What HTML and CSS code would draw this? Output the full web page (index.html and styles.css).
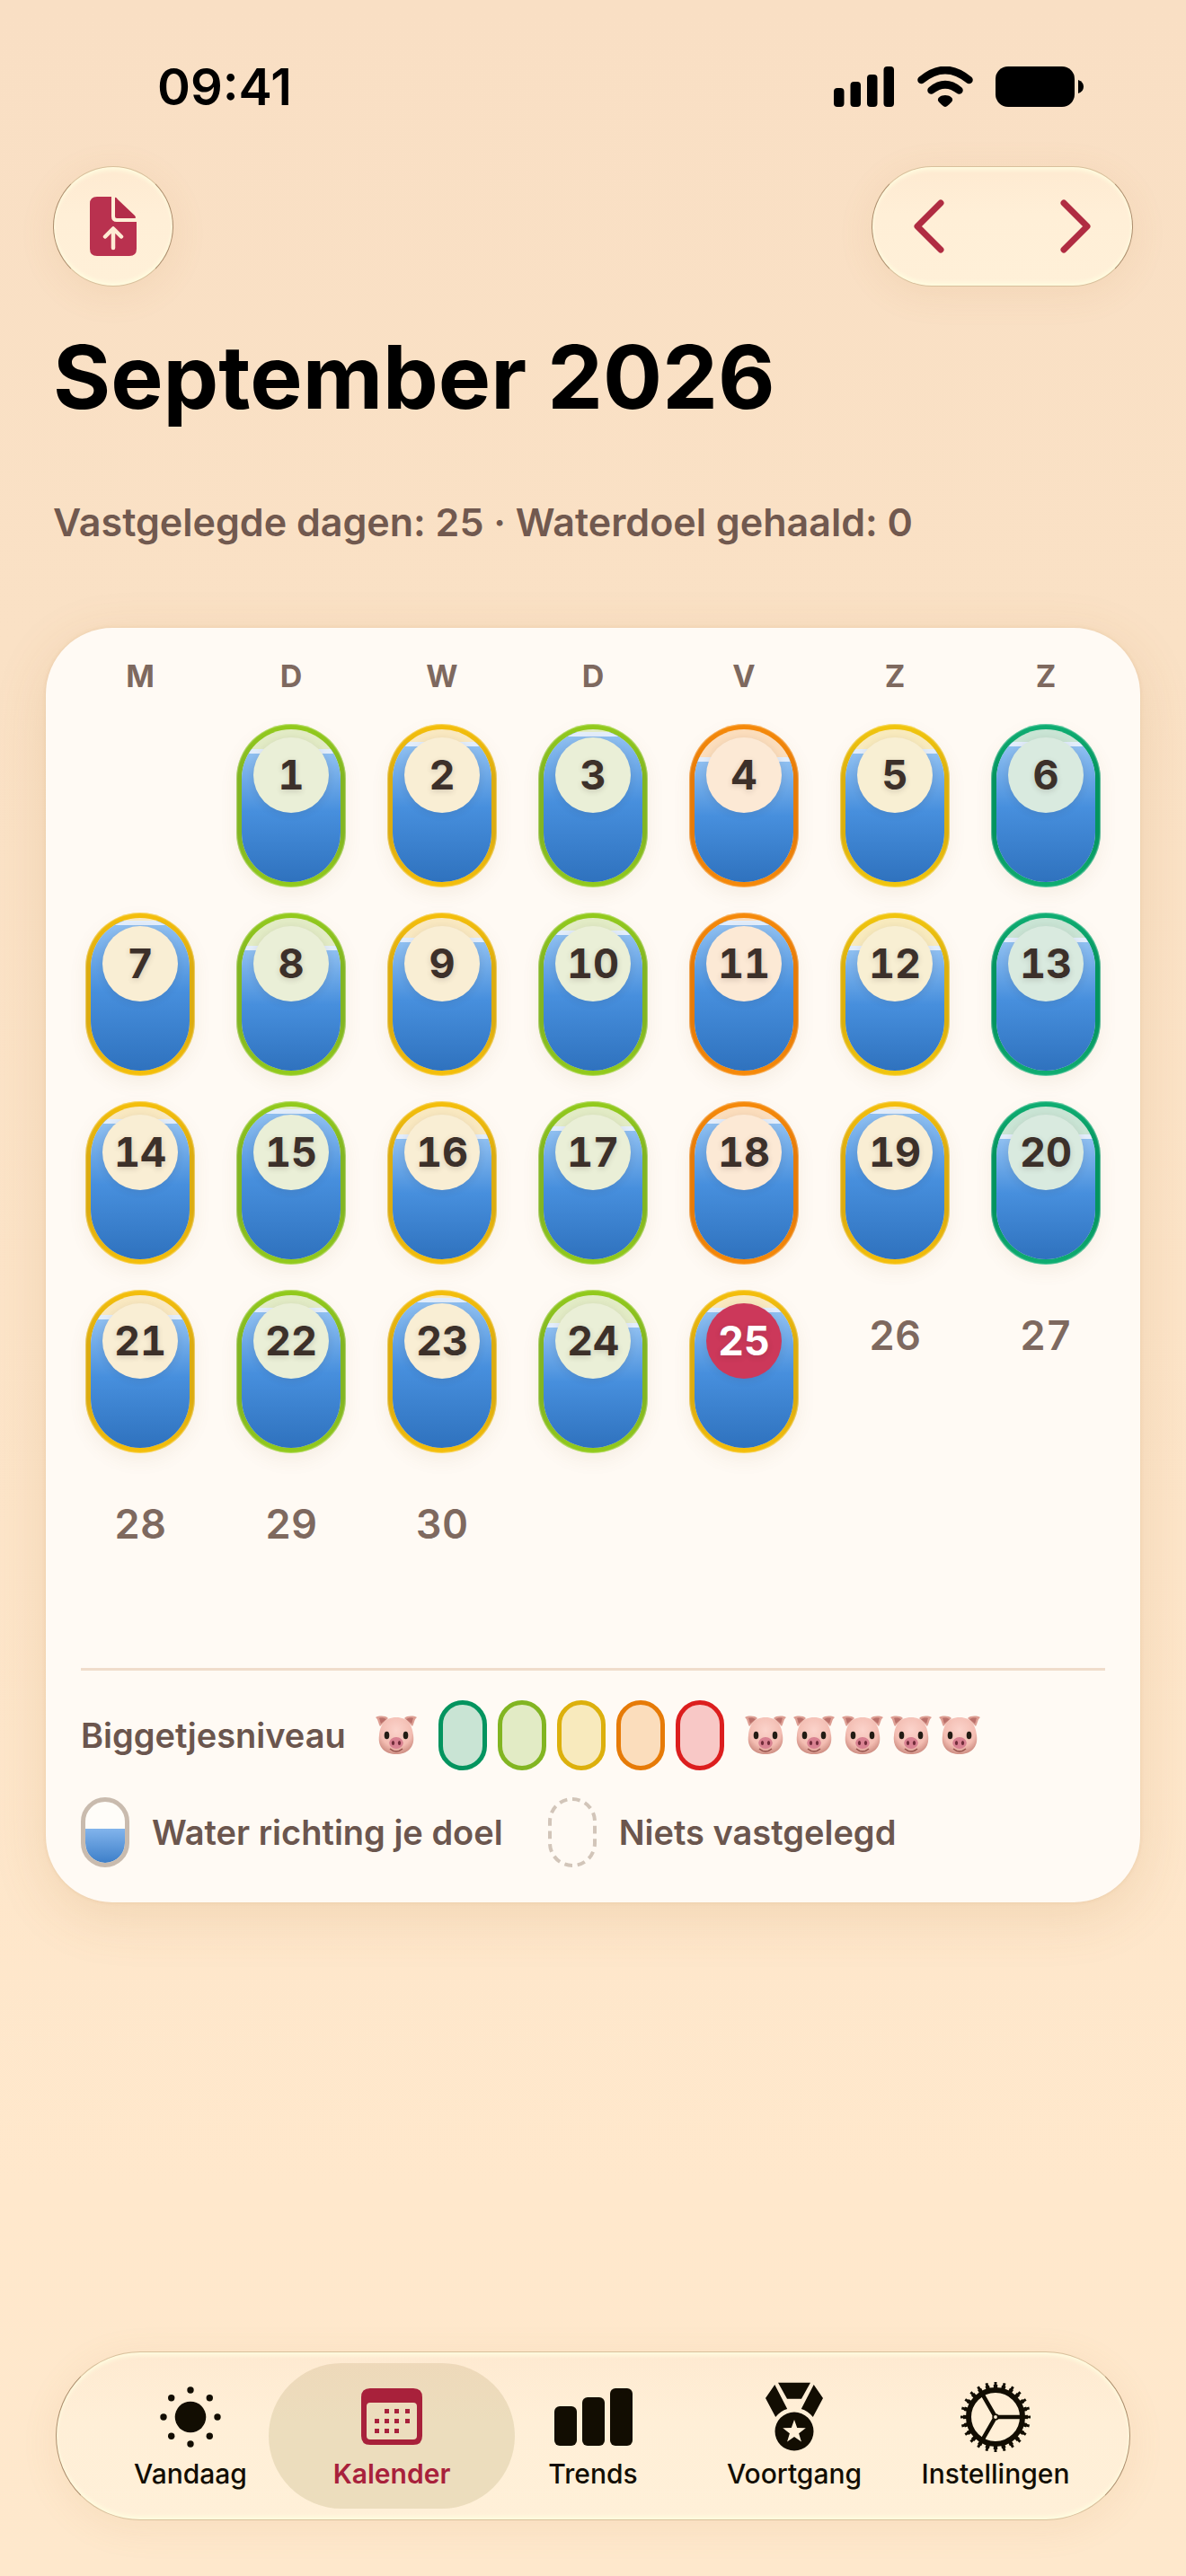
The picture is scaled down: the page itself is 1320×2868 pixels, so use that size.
FILE: index.html
```html
<!DOCTYPE html>
<html lang="nl">
<head>
<meta charset="utf-8">
<meta name="viewport" content="width=device-width, initial-scale=1">
<title>Kalender – September 2026</title>
<link rel="stylesheet" href="styles.css">
</head>
<body>
<svg class="defs" aria-hidden="true">
  <defs>
    <radialGradient id="skin" cx="50%" cy="35%" r="65%">
      <stop offset="0" stop-color="#fbd3cb"/>
      <stop offset=".7" stop-color="#f3bdb2"/>
      <stop offset="1" stop-color="#cf8f84"/>
    </radialGradient>
    <symbol id="pig" viewBox="0 0 46 44">
      <path d="M0 2C4 0 11 0 14 3L5 12C3 9 3 4 0 2Z" fill="#dd9e93"/>
      <path d="M46 2C42 0 35 0 32 3L41 12C43 9 43 4 46 2Z" fill="#dd9e93"/>
      <path d="M4 3C7 2 10 3 12 4L6 9C5 7 5 5 4 3Z" fill="#b9706a"/>
      <path d="M42 3C39 2 36 3 34 4L40 9C41 7 41 5 42 3Z" fill="#b9706a"/>
      <path d="M23 2C36 2 41 11 42 22C44 36 35 43 23 43S2 36 4 22C5 11 10 2 23 2Z" fill="url(#skin)"/>
      <ellipse cx="12.500" cy="22" rx="2.800" ry="4.300" fill="#231c14"/>
      <ellipse cx="33.500" cy="22" rx="2.800" ry="4.300" fill="#231c14"/>
      <path d="M16 37Q23 43 30 37" fill="none" stroke="#94524b" stroke-width="1.500"/>
      <ellipse cx="23" cy="30.500" rx="7.800" ry="6.500" fill="#d98292"/>
      <ellipse cx="19.500" cy="30.500" rx="1.600" ry="2.600" fill="#712c3a"/>
      <ellipse cx="26.500" cy="30.500" rx="1.600" ry="2.600" fill="#712c3a"/>
    </symbol>
  </defs>
</svg>

<div class="status">
  <time>09:41</time>
  <div class="status-icons">
    <svg width="68" height="46" viewBox="0 0 68 46" aria-hidden="true">
      <rect x="0" y="24" width="11.500" height="21" rx="4"/><rect x="18.500" y="17" width="11.500" height="28" rx="4"/><rect x="37" y="9" width="11.500" height="36" rx="4"/><rect x="55.500" y="0" width="11.500" height="45" rx="4"/>
    </svg>
    <svg width="62" height="46" viewBox="0 0 62 46" aria-hidden="true">
      <g fill="none" stroke="#000" stroke-width="8.500" stroke-linecap="round"><path d="M4.500 15Q31 -7 57.500 15"/><path d="M15.500 26.500Q31 14 46.500 26.500"/></g>
      <path d="M31 32C36 32 40 35 39 38C38 40 33 45 31 45S24 40 23 38C22 35 26 32 31 32Z"/>
    </svg>
    <svg width="98" height="46" viewBox="0 0 98 46" aria-hidden="true">
      <rect x="0" y="0" width="88" height="45" rx="14"/><path d="M92 15Q98 17 98 22.500T92 30Z"/>
    </svg>
  </div>
</div>

<header>
  <div class="toolbar">
    <button class="glass share" type="button" aria-label="Exporteren">
      <svg width="52" height="66" viewBox="0 0 52 66" aria-hidden="true">
        <path d="M8 0H24V22Q24 28 30 28H52V58Q52 66 44 66H8Q0 66 0 58V8Q0 0 8 0Z" fill="#b9314f"/>
        <path d="M28 1Q29 0 31 3L50 21Q52 24 50 24H30Q28 24 28 22Z" fill="#b32c49"/>
        <path d="M26 57V36M17 44.500L26 35.500L35 44.500" fill="none" stroke="#feebd4" stroke-width="4.500" stroke-linecap="round" stroke-linejoin="round"/>
      </svg>
    </button>
    <div class="glass pager">
      <button type="button" aria-label="Vorige maand"><svg width="34" height="60" viewBox="0 0 34 60"><path d="M30 4L4 30L30 56"/></svg></button>
      <button type="button" aria-label="Volgende maand"><svg width="34" height="60" viewBox="0 0 34 60"><path d="M4 4L30 30L4 56"/></svg></button>
    </div>
  </div>
  <h1>September 2026</h1>
  <p class="summary">Vastgelegde dagen: 25 · Waterdoel gehaald: 0</p>
</header>

<main class="card">
  <table class="calendar">
    <thead><tr><th>M</th><th>D</th><th>W</th><th>D</th><th>V</th><th>Z</th><th>Z</th></tr></thead>
    <tbody>
      <tr>
        <td></td>
        <td><div class="day green"><div class="tank"><i style="height:87%"></i></div><b>1</b></div></td>
        <td><div class="day amber"><div class="tank"><i style="height:92%"></i></div><b>2</b></div></td>
        <td><div class="day green"><div class="tank"><i style="height:98%"></i></div><b>3</b></div></td>
        <td><div class="day orange"><div class="tank"><i style="height:82%"></i></div><b>4</b></div></td>
        <td><div class="day yellow"><div class="tank"><i style="height:87%"></i></div><b>5</b></div></td>
        <td><div class="day teal"><div class="tank"><i style="height:92%"></i></div><b>6</b></div></td>
      </tr>
      <tr>
        <td><div class="day amber"><div class="tank"><i style="height:98%"></i></div><b>7</b></div></td>
        <td><div class="day green"><div class="tank"><i style="height:82%"></i></div><b>8</b></div></td>
        <td><div class="day amber"><div class="tank"><i style="height:87%"></i></div><b>9</b></div></td>
        <td><div class="day green"><div class="tank"><i style="height:92%"></i></div><b>10</b></div></td>
        <td><div class="day orange"><div class="tank"><i style="height:98%"></i></div><b>11</b></div></td>
        <td><div class="day yellow"><div class="tank"><i style="height:82%"></i></div><b>12</b></div></td>
        <td><div class="day teal"><div class="tank"><i style="height:87%"></i></div><b>13</b></div></td>
      </tr>
      <tr>
        <td><div class="day amber"><div class="tank"><i style="height:92%"></i></div><b>14</b></div></td>
        <td><div class="day green"><div class="tank"><i style="height:98%"></i></div><b>15</b></div></td>
        <td><div class="day amber"><div class="tank"><i style="height:82%"></i></div><b>16</b></div></td>
        <td><div class="day green"><div class="tank"><i style="height:87%"></i></div><b>17</b></div></td>
        <td><div class="day orange"><div class="tank"><i style="height:92%"></i></div><b>18</b></div></td>
        <td><div class="day amber"><div class="tank"><i style="height:98%"></i></div><b>19</b></div></td>
        <td><div class="day teal"><div class="tank"><i style="height:82%"></i></div><b>20</b></div></td>
      </tr>
      <tr>
        <td><div class="day amber"><div class="tank"><i style="height:87%"></i></div><b>21</b></div></td>
        <td><div class="day green"><div class="tank"><i style="height:92%"></i></div><b>22</b></div></td>
        <td><div class="day amber"><div class="tank"><i style="height:98%"></i></div><b>23</b></div></td>
        <td><div class="day green"><div class="tank"><i style="height:82%"></i></div><b>24</b></div></td>
        <td><div class="day amber today"><div class="tank"><i style="height:92%"></i></div><b>25</b></div></td>
        <td><span class="plain">26</span></td>
        <td><span class="plain">27</span></td>
      </tr>
      <tr>
        <td><span class="plain">28</span></td>
        <td><span class="plain">29</span></td>
        <td><span class="plain">30</span></td>
        <td></td><td></td><td></td><td></td>
      </tr>
    </tbody>
  </table>

  <section class="legend" aria-label="Legenda">
    <div class="legend-row">
      <span class="level-label">Biggetjesniveau</span>
      <svg class="pig" role="img" aria-label="Eén biggetje"><use href="#pig"/></svg>
      <div class="swatches">
        <span class="swatch teal"></span><span class="swatch green"></span><span class="swatch yellow"></span><span class="swatch orange"></span><span class="swatch red"></span>
      </div>
      <div class="pigs" role="img" aria-label="Vijf biggetjes">
        <svg class="pig"><use href="#pig"/></svg><svg class="pig"><use href="#pig"/></svg><svg class="pig"><use href="#pig"/></svg><svg class="pig"><use href="#pig"/></svg><svg class="pig"><use href="#pig"/></svg>
      </div>
    </div>
    <div class="legend-row keys">
      <div class="key"><span class="swatch half"></span><span>Water richting je doel</span></div>
      <div class="key">
        <svg width="54" height="78" viewBox="0 0 54 78" aria-hidden="true"><rect x="2" y="2" width="50" height="74" rx="25" fill="none" stroke="#d2c5b9" stroke-width="4" pathLength="210" stroke-dasharray="9 6"/></svg>
        <span>Niets vastgelegd</span>
      </div>
    </div>
  </section>
</main>

<nav class="glass tabs" aria-label="Hoofdnavigatie">
  <a href="#vandaag">
    <svg width="80" height="80" viewBox="0 0 80 80" aria-hidden="true"><circle cx="40" cy="41" r="17.300"/><circle cx="40" cy="11" r="3.700"/><circle cx="40" cy="71" r="3.700"/><circle cx="10" cy="41" r="3.700"/><circle cx="70" cy="41" r="3.700"/><circle cx="18.700" cy="19.700" r="3.700"/><circle cx="61.300" cy="19.700" r="3.700"/><circle cx="18.700" cy="62.300" r="3.700"/><circle cx="61.300" cy="62.300" r="3.700"/></svg>
    <span>Vandaag</span>
  </a>
  <a href="#kalender" class="active" aria-current="page">
    <svg width="80" height="80" viewBox="0 0 80 80" aria-hidden="true">
      <path fill-rule="evenodd" d="M16 9H64Q74 9 74 19V62Q74 72 64 72H16Q6 72 6 62V19Q6 9 16 9ZM16 25Q12 25 12 29V62Q12 66 16 66H64Q68 66 68 62V29Q68 25 64 25Z"/>
      <path d="M32 32h5v5h-5zM43 32h5v5h-5zM55 32h5v5h-5zM21 43h5v5h-5zM32 43h5v5h-5zM43 43h5v5h-5zM55 43h5v5h-5zM21 54h5v5h-5zM32 54h5v5h-5zM43 54h5v5h-5z"/>
    </svg>
    <span>Kalender</span>
  </a>
  <a href="#trends">
    <svg width="90" height="80" viewBox="0 0 90 80" aria-hidden="true"><rect x="2" y="29" width="25" height="44" rx="6"/><rect x="33" y="19" width="25" height="54" rx="6"/><rect x="64" y="9" width="25" height="64" rx="6"/></svg>
    <span>Trends</span>
  </a>
  <a href="#voortgang">
    <svg width="80" height="80" viewBox="0 0 80 80" aria-hidden="true">
      <path d="M22 2.700H58L48 20.700H32ZM18.300 5L32.200 32Q25 34 19.200 41L8 20ZM61.700 5L47.800 32Q55 34 60.800 41L72 20Z"/>
      <path fill-rule="evenodd" d="M40 35.500A21.500 21.500 0 1 1 40 78.500A21.500 21.500 0 1 1 40 35.500ZM40 44L36.800 53.100L27.200 53.300L34.900 59.200L32.100 68.400L40 62.900L47.900 68.400L45.100 59.200L52.800 53.300L43.200 53.100Z"/>
    </svg>
    <span>Voortgang</span>
  </a>
  <a href="#instellingen">
    <svg width="80" height="80" viewBox="0 0 80 80" aria-hidden="true">
      <g fill="none" stroke="#120d02">
        <circle cx="40" cy="41" r="30" stroke-width="6"/>
        <circle cx="40" cy="41" r="34" stroke-width="4" pathLength="240" stroke-dasharray="5 5" stroke-dashoffset="2.500"/>
        <circle cx="40" cy="41" r="37" stroke-width="4" pathLength="240" stroke-dasharray="3 7" stroke-dashoffset="1.500"/>
        <path d="M43 41H68M38.500 38.400L26 16.700M38.500 43.600L26 65.300" stroke-width="4.500"/>
        <circle cx="40" cy="41" r="2.800" stroke-width="1.800"/>
      </g>
    </svg>
    <span>Instellingen</span>
  </a>
</nav>
</body>
</html>
```

FILE: styles.css
```css
* { box-sizing: border-box; }

body {
  margin: 0;
  min-height: 100vh;
  display: flex;
  flex-direction: column;
  font-family: Inter, "Liberation Sans", sans-serif;
  color: #000;
  background: linear-gradient(#f9dfc4, #fae1c5 25%, #ffe8cc 85%, #fee8cc);
}

svg { display: block; flex: none; }
.defs { position: absolute; width: 0; height: 0; }
button { border: 0; padding: 0; background: none; font: inherit; cursor: pointer; }

/* Status bar */
.status {
  display: flex;
  justify-content: space-between;
  align-items: center;
  padding: 57px 114px 48px 175px;
  font-size: 56px;
  font-weight: 600;
  line-height: 80px;
}
.status-icons { display: flex; gap: 25px; }

/* Header */
header { padding: 0 59px; }
.toolbar { display: flex; justify-content: space-between; }
.glass {
  border: 1px solid;
  border-color: #d8c09c #ab8d6c;
  background: linear-gradient(#feead1, #ffefd7 40%, #fff0d8);
  box-shadow: inset 0 4px 5px -1px #fffde0, inset 0 -4px 5px -1px #fffde0, 0 8px 40px #c08a4a1c;
}
.share {
  width: 134px;
  height: 134px;
  border-radius: 50%;
  display: grid;
  place-items: center;
}
.pager {
  width: 291px;
  height: 134px;
  border-radius: 67px;
  display: flex;
  justify-content: space-between;
  padding: 0 12px;
}
.pager button { width: 102px; display: grid; place-items: center; }
.pager path {
  fill: none;
  stroke: #b02c42;
  stroke-width: 7px;
  stroke-linecap: round;
  stroke-linejoin: round;
}
h1 {
  margin: 41px 0 75px;
  font-size: 98px;
  font-weight: 700;
  line-height: 120px;
}
.summary {
  margin: 0 0 92px;
  font-size: 43px;
  font-weight: 600;
  line-height: 52px;
  color: #71594f;
}

/* Calendar card */
.card {
  margin: 0 51px;
  padding: 33px 39px 39px;
  border-radius: 74px;
  background: #fffaf4;
  box-shadow: 0 16px 60px #a8703026, 0 0 4px #a8703026;
}
.calendar {
  width: calc(100% + 36px);
  margin: 0 -18px;
  table-layout: fixed;
  border-collapse: collapse;
  font-variant-numeric: tabular-nums;
}
th {
  height: 74px;
  padding: 0;
  vertical-align: top;
  font-size: 34px;
  font-weight: 700;
  line-height: 42px;
  color: #7e695f;
}
td { height: 210px; padding: 0; vertical-align: top; }

.teal { --edge: #04945f; --shine: #0fae72; --tint: #c9e4d4; --disc: #d9eadf; }
.green { --edge: #82b522; --shine: #93cb1c; --tint: #e2ebc5; --disc: #eaefd7; }
.yellow { --edge: #dcb00d; --shine: #f2c60e; --tint: #f8eabd; --disc: #f8efd3; }
.amber { --edge: #dcac10; --shine: #f5bf0b; --tint: #f9e8c0; --disc: #f9eed4; }
.orange { --edge: #e67b08; --shine: #f68a0a; --tint: #fbddbc; --disc: #fce9d5; }
.red { --edge: #dc1e1e; --tint: #f8c8c6; }

.day {
  width: 122px;
  height: 182px;
  margin: 0 auto;
  padding: 6px;
  border-radius: 61px;
  background: linear-gradient(var(--shine), var(--edge) 32%, var(--edge) 68%, var(--shine));
  box-shadow: inset 0 0 1px 1px #ffffff60, 0 8px 20px #8a603014;
  display: grid;
  justify-items: center;
}
.tank, .day b { grid-area: 1 / 1; }
.tank {
  width: 110px;
  height: 170px;
  border-radius: 55px;
  overflow: hidden;
  background: var(--tint);
  display: flex;
  align-items: flex-end;
}
.tank i {
  width: 100%;
  border-top: 5px solid #e2edfb;
  background: linear-gradient(#8fbff0, #478fdd 45%, #2f72be);
}
.day b {
  z-index: 1;
  width: 84px;
  height: 84px;
  margin-top: 9px;
  border-radius: 50%;
  background: var(--disc);
  box-shadow: 0 2px 8px #3c302a1c;
  text-align: center;
  font-size: 45px;
  font-weight: 700;
  line-height: 84px;
  color: #3c302a;
  text-shadow: 0 2px 6px #3c302a30;
}
.today b { background: #cc385a; color: #fff; }
.plain {
  display: block;
  text-align: center;
  font-size: 45px;
  font-weight: 600;
  line-height: 102px;
  color: #7e695f;
}

/* Legend */
.legend {
  margin-top: 1px;
  padding-top: 33px;
  border-top: 3px solid #f0dccb;
  display: flex;
  flex-direction: column;
  gap: 30px;
  font-size: 38px;
  font-weight: 600;
  line-height: 48px;
  color: #6b564e;
}
.legend-row { display: flex; align-items: center; }
.level-label { min-width: 296px; margin-right: 32px; }
.pig { width: 46px; height: 44px; }
.swatches { display: flex; gap: 12px; margin: 0 23px 0 24px; }
.pigs { display: flex; gap: 8px; }
.swatch {
  width: 54px;
  height: 78px;
  border: 5px solid var(--edge);
  border-radius: 27px;
  background: var(--tint);
}
.half {
  --edge: #c9bbae;
  background: linear-gradient(#fffdf9 44%, #82b4ec 44%, #3d7fc9) padding-box;
}
.keys { gap: 50px; }
.key { display: flex; align-items: center; gap: 25px; }

/* Tab bar */
.tabs {
  margin: auto 62px 62px;
  padding: 0 37px;
  height: 188px;
  border-radius: 94px;
  display: grid;
  grid-template-columns: repeat(5, 1fr);
}
.tabs a {
  position: relative;
  display: flex;
  flex-direction: column;
  align-items: center;
  gap: 6px;
  padding-top: 31px;
  color: #120d02;
  fill: #120d02;
  text-decoration: none;
  font-size: 30px;
  font-weight: 500;
  line-height: 36px;
}
.tabs svg, .tabs span { position: relative; }
.tabs .active { color: #a8213b; fill: #a8213b; font-weight: 600; }
.tabs .active::before {
  content: "";
  position: absolute;
  inset: 12px -25px;
  border-radius: 81px;
  background: linear-gradient(#eed9ba, #ecddbd 40%, #ecddbd);
}
```
